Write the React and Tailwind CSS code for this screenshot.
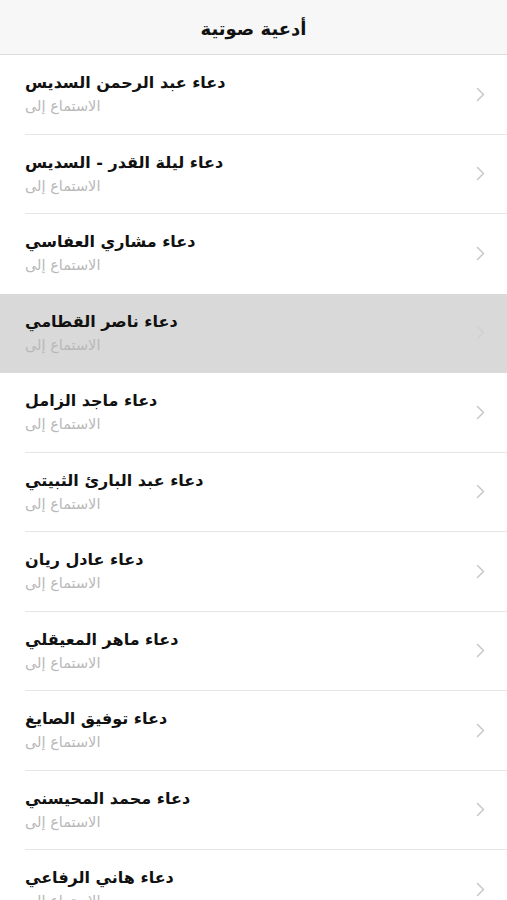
import React from "react";

const items = [
  "دعاء عبد الرحمن السديس",
  "دعاء ليلة القدر - السديس",
  "دعاء مشاري العفاسي",
  "دعاء ناصر القطامي",
  "دعاء ماجد الزامل",
  "دعاء عبد البارئ الثبيتي",
  "دعاء عادل ريان",
  "دعاء ماهر المعيقلي",
  "دعاء توفيق الصايغ",
  "دعاء محمد المحيسني",
  "دعاء هاني الرفاعي",
];

function Chevron({ faint }) {
  return (
    <svg width="9" height="15" viewBox="0 0 9 15" className={faint ? "opacity-40" : ""}>
      <path d="M1.5 1.5 L7.5 7.5 L1.5 13.5" fill="none" stroke="#c7c7cc" strokeWidth="1.5" strokeLinecap="round" strokeLinejoin="round" />
    </svg>
  );
}

export default function App() {
  return (
    <div className="w-[507px] h-[900px] overflow-hidden bg-white" style={{ fontFamily: '"DejaVu Sans", sans-serif' }}>
      <div className="h-[55px] bg-[#f7f7f7] border-b border-[#dcdcdc] flex items-center justify-center pt-[2px]">
        <div dir="rtl" className="text-[18px] font-bold text-[#111]">أدعية صوتية</div>
      </div>
      {items.map((t, i) => {
        const hl = i === 3;
        const nextHl = i === 2;
        return (
          <div key={i} className={`h-[79.5px] flex ${hl ? "bg-[#d9d9d9]" : "bg-white"}`}>
            <div className={`flex-1 ml-[25px] flex items-center pr-[22px] border-b ${hl || nextHl ? "border-transparent" : "border-[#e6e6e6]"}`}>
              <div className="flex-1 flex flex-col items-start">
                <div dir="rtl" className="text-[16px] font-bold text-[#111] leading-[24px]">{t}</div>
                <div dir="rtl" className="text-[14.5px] text-[#b8b8b8] leading-[22px]">الاستماع إلى</div>
              </div>
              <Chevron faint={hl} />
            </div>
          </div>
        );
      })}
    </div>
  );
}
